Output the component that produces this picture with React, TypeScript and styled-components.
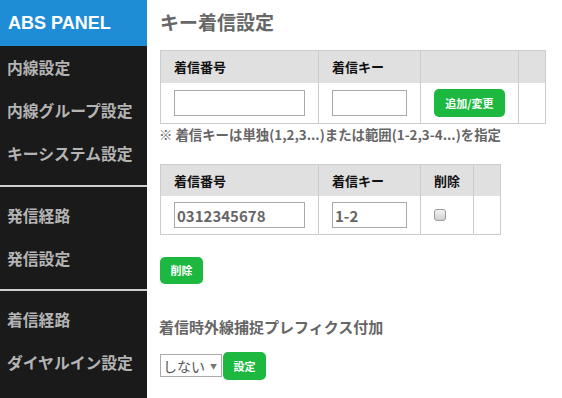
import React, { useState } from 'react';
import styled, { createGlobalStyle } from 'styled-components';

const GlobalStyle = createGlobalStyle`
  html, body {
    margin: 0;
    padding: 0;
    background: #fff;
  }
  body {
    font-family: "Noto Sans CJK JP", "Liberation Sans", sans-serif;
  }
`;

const Page = styled.div`
  display: flex;
  width: 562px;
  height: 398px;
  overflow: hidden;
`;

// Sidebar
const Sidebar = styled.nav`
  width: 147px;
  flex-shrink: 0;
  background-color: #1a1a1a;
  display: flex;
  flex-direction: column;
`;

const Brand = styled.div`
  height: 46px;
  background-color: #1f8dd6;
  color: #fff;
  font-family: "Liberation Sans", Arial, sans-serif;
  font-weight: bold;
  font-size: 18px;
  display: flex;
  align-items: center;
  padding-left: 8px;
`;

const MenuGroup = styled.div<{ $first?: boolean }>`
  padding: ${(p) => (p.$first ? '0 0 10px' : '7px 0 9px')};
  border-top: ${(p) => (p.$first ? 'none' : '2px solid #cfcfcf')};
`;

const MenuItem = styled.a`
  display: flex;
  align-items: center;
  height: 43px;
  padding-left: 7px;
  color: #b4b4b4;
  font-size: 15.8px;
  font-weight: bold;
  text-decoration: none;
  cursor: pointer;
`;

// Main
const Main = styled.main`
  flex: 1;
  padding: 10px 0 0 13px;
  color: #666;
`;

const Title = styled.h1`
  margin: 0 0 17px;
  font-size: 19px;
  line-height: 23px;
  font-weight: bold;
  color: #666;
`;

const Table = styled.table`
  border-collapse: collapse;
  border: 1px solid #ccc;
`;

const Th = styled.th<{ $w: number; $center?: boolean }>`
  width: ${(p) => p.$w}px;
  height: 32px;
  box-sizing: border-box;
  padding: 0 13px;
  background-color: #e0e0e0;
  border: 1px solid #ccc;
  border-bottom: none;
  text-align: ${(p) => (p.$center ? 'center' : 'left')};
  white-space: nowrap;
  font-size: 13px;
  font-weight: bold;
  color: #111;
`;

const Td = styled.td`
  padding: 6px 13px;
  border: 1px solid #ccc;
  border-top: none;
  vertical-align: middle;
`;

const TextInput = styled.input<{ $w: number }>`
  display: block;
  box-sizing: border-box;
  width: ${(p) => p.$w}px;
  height: 26px;
  border: 1px solid #aaa;
  border-radius: 0;
  padding: 0 2px;
  font-family: "Noto Sans CJK JP", "Liberation Sans", sans-serif;
  font-size: 15px;
  font-weight: bold;
  color: #666;
  outline: none;
`;

const GreenButton = styled.button<{ $w: number; $h?: number }>`
  display: inline-flex;
  align-items: center;
  justify-content: center;
  width: ${(p) => p.$w}px;
  height: ${(p) => p.$h ?? 28}px;
  padding: 0;
  border: none;
  border-radius: 5px;
  background-color: #1db83f;
  color: #fff;
  font-family: "Noto Sans CJK JP", "Liberation Sans", sans-serif;
  font-size: 11px;
  font-weight: bold;
  cursor: pointer;
`;

const Note = styled.p`
  margin: 1px 0 21px -1px;
  font-size: 13.4px;
  line-height: 18px;
  font-weight: bold;
  color: #666;
  white-space: nowrap;
`;

const Check = styled.input`
  appearance: none;
  display: block;
  margin: 0;
  width: 12px;
  height: 12px;
  border: 1px solid #9a9a9a;
  border-radius: 3px;
  background: linear-gradient(#f2f2f2, #d0d0d0);
`;

const DeleteRow = styled.div`
  margin-top: 21px;
`;

const SubTitle = styled.h2`
  margin: 33px 0 15px -1px;
  font-size: 15px;
  line-height: 20px;
  font-weight: bold;
  color: #666;
`;

const SettingRow = styled.div`
  display: flex;
  align-items: center;
  gap: 1px;
`;

const SelectBox = styled.div`
  display: flex;
  align-items: center;
  box-sizing: border-box;
  width: 62px;
  height: 23px;
  border: 1px solid #aaa;
  padding: 0 0 0 2px;
  font-size: 14px;
  color: #555;
  white-space: nowrap;
`;

const Arrow = styled.span`
  margin-left: 5px;
  font-size: 7px;
  color: #777;
`;

export default function App() {
  const [number, setNumber] = useState('');
  const [key, setKey] = useState('');
  const [checked, setChecked] = useState(false);

  return (
    <>
      <GlobalStyle />
      <Page>
        <Sidebar>
          <Brand>ABS PANEL</Brand>
          <MenuGroup $first>
            <MenuItem>内線設定</MenuItem>
            <MenuItem>内線グループ設定</MenuItem>
            <MenuItem>キーシステム設定</MenuItem>
          </MenuGroup>
          <MenuGroup>
            <MenuItem>発信経路</MenuItem>
            <MenuItem>発信設定</MenuItem>
          </MenuGroup>
          <MenuGroup>
            <MenuItem>着信経路</MenuItem>
            <MenuItem>ダイヤルイン設定</MenuItem>
          </MenuGroup>
        </Sidebar>

        <Main>
          <Title>キー着信設定</Title>

          <Table>
            <thead>
              <tr>
                <Th $w={157}>着信番号</Th>
                <Th $w={101}>着信キー</Th>
                <Th $w={98}></Th>
                <Th $w={26}></Th>
              </tr>
            </thead>
            <tbody>
              <tr>
                <Td>
                  <TextInput $w={131} value={number} onChange={(e) => setNumber(e.target.value)} />
                </Td>
                <Td>
                  <TextInput $w={75} value={key} onChange={(e) => setKey(e.target.value)} />
                </Td>
                <Td>
                  <GreenButton $w={71}>追加/変更</GreenButton>
                </Td>
                <Td></Td>
              </tr>
            </tbody>
          </Table>
          <Note>※ 着信キーは単独(1,2,3...)または範囲(1-2,3-4...)を指定</Note>

          <Table>
            <thead>
              <tr>
                <Th $w={157}>着信番号</Th>
                <Th $w={101}>着信キー</Th>
                <Th $w={52} $center>削除</Th>
                <Th $w={26}></Th>
              </tr>
            </thead>
            <tbody>
              <tr>
                <Td>
                  <TextInput $w={131} defaultValue="0312345678" />
                </Td>
                <Td>
                  <TextInput $w={75} defaultValue="1-2" />
                </Td>
                <Td>
                  <Check type="checkbox" checked={checked} onChange={() => setChecked(!checked)} />
                </Td>
                <Td></Td>
              </tr>
            </tbody>
          </Table>

          <DeleteRow>
            <GreenButton $w={43} $h={27}>削除</GreenButton>
          </DeleteRow>

          <SubTitle>着信時外線捕捉プレフィクス付加</SubTitle>
          <SettingRow>
            <SelectBox>
              しない<Arrow>▼</Arrow>
            </SelectBox>
            <GreenButton $w={43}>設定</GreenButton>
          </SettingRow>
        </Main>
      </Page>
    </>
  );
}
